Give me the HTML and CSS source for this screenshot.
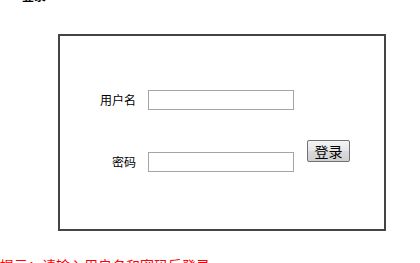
FILE: index.html
```html
<!DOCTYPE html>
<html lang="zh">
<head>
<meta charset="utf-8">
<title>登录</title>
<link rel="stylesheet" href="styles.css">
</head>
<body>
<div class="title">登录</div>
<div class="box">
  <form class="form">
    <label class="lbl">用户名</label>
    <input class="inp" type="text">
    <button class="btn" type="button">登录</button>
    <label class="lbl">密码</label>
    <input class="inp" type="password">
  </form>
</div>
<div class="msg">提示：请输入用户名和密码后登录</div>
</body>
</html>
```

FILE: styles.css
```css
html, body {
  margin: 0;
  padding: 0;
  background: #fff;
  font-family: "Noto Sans CJK SC", "Noto Sans", sans-serif;
  overflow: hidden;
}
.title {
  margin-top: -12px;
  margin-left: 22px;
  height: 16px;
  font-size: 12px;
  line-height: 16px;
  font-weight: bold;
  color: #000;
}
.box {
  margin-top: 30px;
  margin-left: 58px;
  width: 324px;
  height: 193px;
  border: 2px solid #444;
}
.form {
  display: grid;
  grid-template-columns: 76px 146px auto;
  grid-template-rows: 20px 20px;
  column-gap: 12px;
  row-gap: 42px;
  padding-top: 54px;
  margin: 0;
}
.lbl {
  font-size: 12px;
  color: #000;
  text-align: right;
  align-self: center;
  line-height: 14px;
}
.inp {
  box-sizing: border-box;
  width: 146px;
  height: 20px;
  margin: 0;
  border: 1px solid #a5a5a5;
  padding: 0 2px;
  background: #fff;
}
.btn {
  grid-row: 1 / 3;
  grid-column: 3;
  align-self: start;
  justify-self: start;
  margin-top: 50px;
  margin-left: 1px;
  box-sizing: border-box;
  width: 43px;
  height: 22px;
  padding: 0;
  border: 1px solid #707070;
  border-radius: 2px;
  background: linear-gradient(#f4f4f4, #e6e6e6 50%, #dadada 51%, #d0d0d0);
  font-family: "Noto Sans CJK SC", sans-serif;
  font-size: 14px;
  line-height: 18px;
  color: #000;
}
.msg {
  margin-top: 25px;
  font-size: 14px;
  line-height: 18px;
  color: #f00;
  white-space: nowrap;
}
```
